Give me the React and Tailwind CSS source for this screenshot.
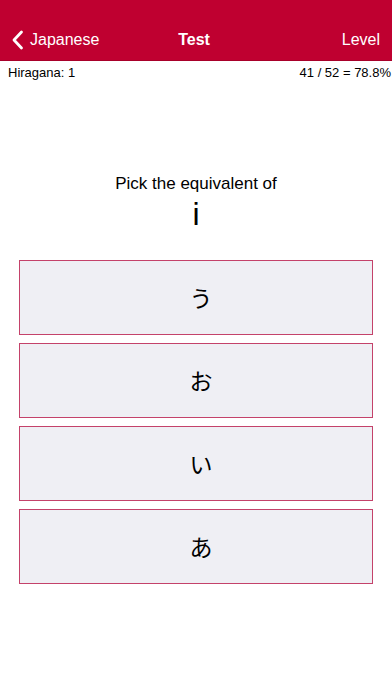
const CHOICES = ['う', 'お', 'い', 'あ'];

export default function App() {
  return (
    <div className="w-[392px] h-[696px] bg-white flex flex-col font-['Liberation_Sans','Noto_Sans_CJK_JP',sans-serif] text-black">
      {/* nav bar */}
      <div className="h-[61px] bg-[#bf0030] pt-[20px] px-[8px] text-white border-b border-[#a8002a]">
        <div className="h-[40px] flex items-center">
          <div className="flex-1 flex items-center">
            <svg width="12" height="20" viewBox="0 0 12 20" className="ml-[4px]">
              <path d="M9.5 2 L2 10 L9.5 18" fill="none" stroke="white" strokeWidth="2.8" strokeLinecap="round" strokeLinejoin="round" />
            </svg>
            <span className="text-[16px] ml-[6px]">Japanese</span>
          </div>
          <span className="text-[16px] font-bold">Test</span>
          <div className="flex-1 flex justify-end pr-[4px]">
            <span className="text-[16px]">Level</span>
          </div>
        </div>
      </div>

      {/* stats */}
      <div className="flex justify-between pl-[8px] pr-[1px] pt-[4px] text-[13px] leading-[16px]">
        <span>Hiragana: 1</span>
        <span>41 / 52 = 78.8%</span>
      </div>

      {/* question */}
      <div className="mt-[92px] flex flex-col items-center">
        <span className="text-[17px] leading-[22px]">Pick the equivalent of</span>
        <span className="text-[32px] leading-[36px] mt-[1px]">i</span>
      </div>

      {/* answers */}
      <div className="mt-[28px] px-[19px] flex flex-col gap-[8px]">
        {CHOICES.map((c) => (
          <button
            key={c}
            className="h-[75px] bg-[#efeff4] border border-[#c4426a] flex items-center justify-center pl-[10px] text-[23px] font-['Noto_Sans_CJK_JP',sans-serif]"
          >
            {c}
          </button>
        ))}
      </div>
    </div>
  );
}
